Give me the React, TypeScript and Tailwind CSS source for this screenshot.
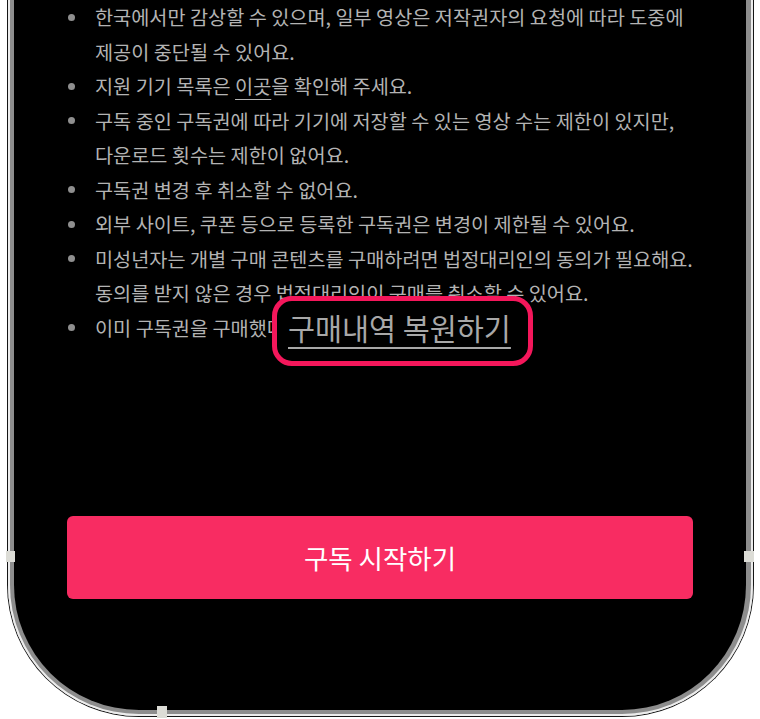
import React from "react"

const items: { lines: React.ReactNode[] }[] = [
  { lines: ["한국에서만 감상할 수 있으며, 일부 영상은 저작권자의 요청에 따라 도중에", "제공이 중단될 수 있어요."] },
  {
    lines: [
      <>
        지원 기기 목록은 <span className="underline underline-offset-[5px] decoration-1">이곳</span>을 확인해 주세요.
      </>,
    ],
  },
  { lines: ["구독 중인 구독권에 따라 기기에 저장할 수 있는 영상 수는 제한이 있지만,", "다운로드 횟수는 제한이 없어요."] },
  { lines: ["구독권 변경 후 취소할 수 없어요."] },
  { lines: ["외부 사이트, 쿠폰 등으로 등록한 구독권은 변경이 제한될 수 있어요."] },
  { lines: ["미성년자는 개별 구매 콘텐츠를 구매하려면 법정대리인의 동의가 필요해요.", "동의를 받지 않은 경우 법정대리인이 구매를 취소할 수 있어요."] },
  { lines: ["이미 구독권을 구매했다면"] },
]

export default function App() {
  return (
    <div
      className="relative w-[760px] h-[719px] overflow-hidden bg-white"
      style={{ fontFamily: '"Noto Sans CJK KR", "Noto Sans", sans-serif' }}
    >
      {/* phone body */}
      <div className="ml-[7px] w-[747px] h-[717px] rounded-b-[132px] border-x border-b border-[#151515] bg-[#e6e6e6]">
        <div className="h-full rounded-b-[131px] border-x-2 border-b-2 border-[#ececec]">
          <div className="h-full rounded-b-[129px] border-l-4 border-r-[5px] border-b-4 border-[#8d8d8d] bg-black">
            <div className="flex h-full flex-col">
              <ul className="pl-[53px] text-[19.7px] leading-[34.5px] text-[#b3b3b3]">
                {items.map((item, i) => (
                  <li key={i} className="flex">
                    <div className="flex h-[34.5px] w-[28px] shrink-0 items-center">
                      <span className="ml-[1px] h-[7px] w-[7px] rounded-full bg-[#8f8f8f]" />
                    </div>
                    <div className="whitespace-nowrap">
                      {item.lines.map((line, j) => (
                        <div key={j}>{line}</div>
                      ))}
                    </div>
                  </li>
                ))}
              </ul>

              <button className="mx-[53px] mt-[171px] h-[83px] rounded-[6px] bg-[#f82c62] text-[26.5px] font-normal text-white">
                구독 시작하기
              </button>
            </div>
          </div>
        </div>
      </div>

      {/* antenna bands */}
      <div className="absolute left-[6px] top-[551px] h-[11px] w-[9px] bg-[#dcdcd6]" />
      <div className="absolute left-[744px] top-[551px] h-[11px] w-[10px] bg-[#dcdcd6]" />
      <div className="absolute left-[157px] top-[706px] h-[12px] w-[10px] bg-[#dcdcd6]" />

      {/* zoomed callout */}
      <div className="absolute left-[272px] top-[296px] flex h-[70px] w-[261px] items-center rounded-[20px] border-[5px] border-[#f4175b] bg-black pb-[6px] pl-[11px]">
        <span className="text-[29.4px] font-normal leading-none text-[#a8a8a8] underline decoration-[2px] underline-offset-[7px]">
          구매내역 복원하기
        </span>
      </div>
    </div>
  )
}
